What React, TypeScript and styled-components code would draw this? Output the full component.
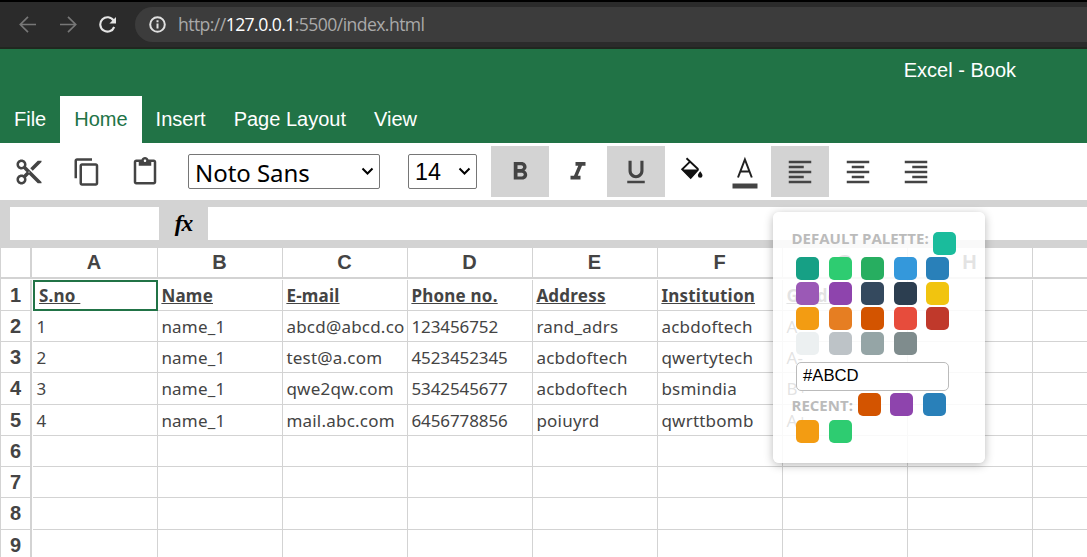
import React from "react";
import styled, { createGlobalStyle } from "styled-components";
import {
  MdContentCut,
  MdContentCopy,
  MdContentPaste,
  MdFormatBold,
  MdFormatItalic,
  MdFormatUnderlined,
  MdFormatAlignLeft,
  MdFormatAlignCenter,
  MdFormatAlignRight,
} from "react-icons/md";

const Global = createGlobalStyle`
  *, *::before, *::after { box-sizing: border-box; }
  html, body { margin: 0; overflow: hidden; }
  body { background: #fff; color: #444; font-family: "Liberation Sans", Arial, sans-serif; }
`;

const Page = styled.div`
  position: relative;
  width: 1087px;
  height: 557px;
  overflow: hidden;
  display: flex;
  flex-direction: column;
  background: #fff;
`;

const BrowserBar = styled.div`
  flex: none;
  height: 49px;
  display: flex;
  align-items: flex-start;
  padding: 5px 0 0 19px;
  background: #2b2b2b;
  border-top: 2px solid #000;
  border-bottom: 2px solid #20271f;
`;

const NavIcon = styled.svg<{ $gap: number }>`
  flex: none;
  width: 18px;
  height: 35px;
  margin-right: ${(p) => p.$gap}px;
  fill: none;
`;

const Address = styled.div`
  flex: 1;
  height: 35px;
  display: flex;
  align-items: center;
  padding-left: 14px;
  border-radius: 18px 0 0 18px;
  background: #3c3c3c;
  color: #a9a9a9;
  font: 17.6px/35px "Open Sans", "Noto Sans", sans-serif;
  letter-spacing: -0.57px;
  white-space: nowrap;
`;

const Host = styled.span`
  color: #fff;
`;

const InfoIcon = styled.svg`
  width: 17px;
  height: 17px;
  margin-right: 12px;
  fill: none;
`;

const Ribbon = styled.header`
  flex: none;
  height: 94px;
  display: flex;
  flex-direction: column;
  justify-content: space-between;
  background: #217346;
  color: #fff;
  font-size: 20px;
`;

const Title = styled.div`
  align-self: flex-end;
  padding: 9px 71px 0 0;
  line-height: 24px;
`;

const Tabs = styled.nav`
  display: flex;
`;

const Tab = styled.div<{ $active?: boolean }>`
  height: 47px;
  padding: 0 14px;
  line-height: 46px;
  background: ${(p) => (p.$active ? "#fff" : "transparent")};
  color: ${(p) => (p.$active ? "#217346" : "#fff")};
`;

const Toolbar = styled.div`
  flex: none;
  height: 57px;
  display: flex;
  align-items: center;
`;

const Tool = styled.button<{ $on?: boolean; $width?: number }>`
  flex: none;
  display: flex;
  flex-direction: column;
  align-items: center;
  justify-content: center;
  width: ${(p) => p.$width ?? 58}px;
  height: 51px;
  padding: 0;
  border: 0;
  color: #444;
  background: ${(p) => (p.$on ? "#d3d3d3" : "transparent")};

  svg { display: block; width: 30px; height: 30px; overflow: visible; }
`;

const Select = styled.div<{ $width: number; $left: number }>`
  flex: none;
  display: flex;
  align-items: center;
  justify-content: space-between;
  width: ${(p) => p.$width}px;
  height: 35px;
  margin-left: ${(p) => p.$left}px;
  padding: 0 5px 0 6px;
  border: 1px solid #767676;
  border-radius: 2px;
  color: #000;
`;

const FontName = styled.span`
  padding-top: 2px;
  font: 24px/33px "Noto Sans", sans-serif;
  letter-spacing: -0.05px;
`;

const FontSize = styled.span`
  padding-top: 1px;
  font: 23.3px/31px "Liberation Sans", Arial, sans-serif;
`;

const ToolGroup = styled.div`
  display: flex;
  margin-left: 14px;
`;

const Chevron = styled.svg`
  width: 13px;
  height: 9px;
  fill: none;
  stroke: #000;
  stroke-width: 2;
`;

const FormulaBar = styled.div`
  flex: none;
  height: 48px;
  display: flex;
  align-items: flex-start;
  padding: 7px 0 0 10px;
  background: #d3d3d3;
`;

const AddressBox = styled.div`
  width: 149px;
  height: 33px;
  background: #fff;
`;

const Fx = styled.div`
  width: 49px;
  text-align: center;
  color: #000;
  font: italic bold 23.5px/32px "Liberation Serif", serif;
  letter-spacing: -1px;
`;

const FormulaBox = styled.div`
  flex: 1;
  height: 33px;
  background: #fff;
`;

const Sheet = styled.div`
  flex: none;
  width: 1200px;
  border-left: 1px solid #d3d3d3;
`;

const HeadRow = styled.div`
  display: flex;
  height: 31px;
  border-bottom: 2px solid #d3d3d3;
  font-weight: 700;
  font-size: 20px;
  line-height: 29px;
  text-align: center;
`;

const Corner = styled.div`
  width: 31px;
  border-right: 2px solid #d3d3d3;
`;

const ColumnHead = styled.div`
  width: 125px;
  padding-right: 1px;
  border-right: 1px solid #d3d3d3;

  &:nth-child(2) { width: 126px; }
`;

const Body = styled.div`
  padding-top: 0.7px;
`;

const Row = styled.div`
  display: flex;
  height: 31.25px;
`;

const RowHead = styled.div`
  width: 31px;
  border-right: 2px solid #d3d3d3;
  border-bottom: 1px solid #d3d3d3;
  margin-right: 1px;
  font-weight: 700;
  font-size: 20px;
  line-height: 30px;
  text-align: center;
`;

const Cell = styled.div<{ $bold?: boolean; $selected?: boolean; $numeric?: boolean }>`
  width: 125px;
  overflow: hidden;
  padding: ${(p) => (p.$selected ? "0 0 0 4px" : "1px 0 0 3.4px")};
  border: 0 solid #d3d3d3;
  border-width: 0 1px 1px 0;
  ${(p) => p.$selected && "border: 2px solid #217346;"}
  font: ${(p) => (p.$bold ? 700 : 400)} 17px/${(p) => (p.$selected ? 28 : 30)}px "Noto Sans", sans-serif;
  letter-spacing: ${(p) => (p.$numeric ? -0.1 : 0.22)}px;
  text-decoration: ${(p) => (p.$bold ? "underline" : "none")};
  white-space: pre;
`;

const Picker = styled.div`
  position: absolute;
  left: 773px;
  top: 212px;
  width: 212px;
  height: 251px;
  display: flex;
  flex-direction: column;
  padding: 20px 19px 0;
  border-radius: 6px;
  background: rgba(255, 255, 255, 0.85);
  box-shadow: 0 2px 10px rgba(0, 0, 0, 0.28);
`;

const PickerLine = styled.div<{ $height: number; $indent?: boolean }>`
  display: flex;
  height: ${(p) => p.$height}px;
  gap: 9.5px;
  padding-left: ${(p) => (p.$indent ? 4 : 0)}px;
`;

const PickerLabel = styled.div<{ $width: number; $lift?: number }>`
  width: ${(p) => p.$width}px;
  height: 23px;
  margin: ${(p) => -(p.$lift ?? 0)}px -9.5px 0 -0.5px;
  color: #bbb;
  font: 700 15px/${(p) => (p.$lift ? 15 : 25)}px "Open Sans", "Noto Sans", sans-serif;
  white-space: nowrap;
`;

const Swatch = styled.div<{ $color: string }>`
  flex: none;
  width: 23px;
  height: 23px;
  border-radius: 5px;
  background: ${(p) => p.$color};
`;

const HexInput = styled.div`
  flex: none;
  width: 153px;
  height: 29px;
  margin: 5px 0 2px 4px;
  padding-left: 6px;
  border: 1px solid #bbb;
  border-radius: 5px;
  background: #fff;
  color: #000;
  font-size: 16.7px;
  line-height: 26px;
`;

const columns = ["A", "B", "C", "D", "E", "F", "G", "H", ""];

const rows: string[][] = [
  ["S.no ", "Name", "E-mail", "Phone no.", "Address", "Institution", "Grade"],
  ["1", "name_1", "abcd@abcd.co", "123456752", "rand_adrs", "acbdoftech", "A"],
  ["2", "name_1", "test@a.com", "4523452345", "acbdoftech", "qwertytech", "A-"],
  ["3", "name_1", "qwe2qw.com", "5342545677", "acbdoftech", "bsmindia", "B+"],
  ["4", "name_1", "mail.abc.com", "6456778856", "poiuyrd", "qwrttbomb", "A+"],
  [],
  [],
  [],
  [],
];

const palette = [
  ["#16a085", "#2ecc71", "#27ae60", "#3498db", "#2980b9"],
  ["#9b59b6", "#8e44ad", "#34495e", "#2c3e50", "#f1c40f"],
  ["#f39c12", "#e67e22", "#d35400", "#e74c3c", "#c0392b"],
  ["#ecf0f1", "#bdc3c7", "#95a5a6", "#7f8c8d"],
];

const Arrow = () => (
  <Chevron viewBox="0 0 13 9">
    <path d="M1.5 1.500 6.500 6.500 11.500 1.500" />
  </Chevron>
);

const ColorPicker = () => (
  <Picker>
    <PickerLine $height={25}>
      <PickerLabel $width={141.5} $lift={1}>DEFAULT PALETTE:</PickerLabel>
      <Swatch $color="#1abc9c" />
    </PickerLine>
    {palette.map((line, i) => (
      <PickerLine key={i} $height={25} $indent>
        {line.map((c) => (
          <Swatch key={c} $color={c} />
        ))}
      </PickerLine>
    ))}
    <HexInput>#ABCD</HexInput>
    <PickerLine $height={27}>
      <PickerLabel $width={66.3}>RECENT:</PickerLabel>
      <Swatch $color="#d35400" />
      <Swatch $color="#8e44ad" />
      <Swatch $color="#2980b9" />
    </PickerLine>
    <PickerLine $height={25} $indent>
      <Swatch $color="#f39c12" />
      <Swatch $color="#2ecc71" />
    </PickerLine>
  </Picker>
);

export default function App() {
  return (
    <Page>
      <Global />
      <BrowserBar>
        <NavIcon $gap={22} viewBox="0 0 18 35" stroke="#777" strokeWidth="1.7">
          <path d="M17 17.5H1.5M9 9.8 1.3 17.5 9 25.2" />
        </NavIcon>
        <NavIcon $gap={22} viewBox="0 0 18 35" stroke="#777" strokeWidth="1.7">
          <path d="M1 17.5h15.5M9 9.8l7.7 7.7L9 25.2" />
        </NavIcon>
        <NavIcon $gap={18} viewBox="0 0 18 35" stroke="#e4e4e4" strokeWidth="2.1">
          <path d="M14.6 13.6A7.2 7.2 0 1 0 15.2 20" />
          <path d="M17 10v6.600h-6.600z" fill="#e4e4e4" stroke="none" />
        </NavIcon>
        <Address>
          <InfoIcon viewBox="0 0 17 17">
            <circle cx="8.5" cy="8.5" r="7.3" stroke="#e0e0e0" strokeWidth="2" />
            <path d="M8.5 7.5v5M8.5 4.2v2" stroke="#e0e0e0" strokeWidth="2" />
          </InfoIcon>
          <span>
            http://<Host>127.0.0.1</Host>:5500/index.html
          </span>
        </Address>
      </BrowserBar>
      <Ribbon>
        <Title>Excel - Book</Title>
        <Tabs>
          <Tab>File</Tab>
          <Tab $active>Home</Tab>
          <Tab>Insert</Tab>
          <Tab>Page Layout</Tab>
          <Tab>View</Tab>
        </Tabs>
      </Ribbon>
      <Toolbar>
        <Tool><MdContentCut /></Tool>
        <Tool><MdContentCopy /></Tool>
        <Tool><MdContentPaste /></Tool>
        <Select $width={192} $left={14}>
          <FontName>Noto Sans</FontName>
          <Arrow />
        </Select>
        <Select $width={69} $left={28}>
          <FontSize>14</FontSize>
          <Arrow />
        </Select>
        <ToolGroup>
          <Tool $on><MdFormatBold /></Tool>
          <Tool><MdFormatItalic /></Tool>
          <Tool $on><MdFormatUnderlined /></Tool>
          <Tool $width={53}>
            <svg viewBox="0 0 30 30">
              <path d="M9.5 1.200 21.200 12.200M13.300 4.400 5.200 12.300l8.500 8.500 7.800-8.600" fill="none" stroke="#111" strokeWidth="1.900" />
              <path d="M5 12.500h16.500l-7.800 8.800z" fill="#111" />
              <path d="M23.200 14.300s2.300 2.800 2.300 4.200a2.300 2.300 0 0 1-4.600 0c0-1.400 2.300-4.200 2.300-4.200z" fill="#111" />
            </svg>
          </Tool>
          <Tool $width={53}>
            <svg viewBox="0 0 30 30">
              <path d="M8 20.500 14.900 2.500 21.800 20.500M10.200 14.500h9.400" fill="none" stroke="#222" strokeWidth="2" />
              <path d="M2.500 26.500h25v5h-25z" fill="#444" />
            </svg>
          </Tool>
          <Tool $on><MdFormatAlignLeft /></Tool>
          <Tool><MdFormatAlignCenter /></Tool>
          <Tool><MdFormatAlignRight /></Tool>
        </ToolGroup>
      </Toolbar>
      <FormulaBar>
        <AddressBox />
        <Fx>fx</Fx>
        <FormulaBox />
      </FormulaBar>
      <Sheet>
        <HeadRow>
          <Corner />
          {columns.map((c, i) => (
            <ColumnHead key={i}>{c}</ColumnHead>
          ))}
        </HeadRow>
        <Body>
          {rows.map((row, r) => (
            <Row key={r}>
              <RowHead>{r + 1}</RowHead>
              {columns.map((_, c) => (
                <Cell
                  key={c}
                  $bold={r === 0}
                  $selected={r === 0 && c === 0}
                  $numeric={/^\d+$/.test(row[c] ?? "")}
                >
                  {row[c]}
                </Cell>
              ))}
            </Row>
          ))}
        </Body>
      </Sheet>
      <ColorPicker />
    </Page>
  );
}
